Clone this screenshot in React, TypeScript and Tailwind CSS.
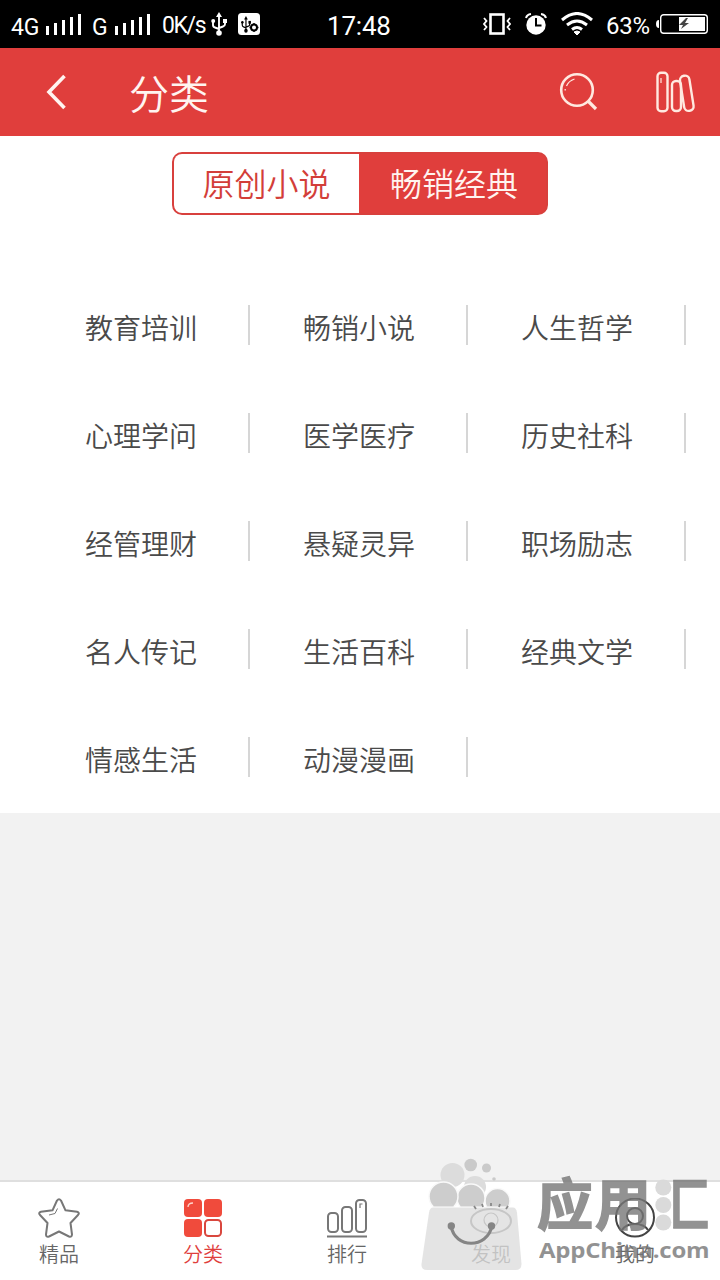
import React from 'react';

const categories = [
  '教育培训', '畅销小说', '人生哲学',
  '心理学问', '医学医疗', '历史社科',
  '经管理财', '悬疑灵异', '职场励志',
  '名人传记', '生活百科', '经典文学',
  '情感生活', '动漫漫画',
];

const Signal = () => (
  <svg width="36" height="24" viewBox="0 0 36 24" fill="#fff" className="shrink-0">
    <rect x="0" y="14" width="3" height="9" />
    <rect x="8" y="11" width="3" height="12" />
    <rect x="16" y="8" width="3" height="15" />
    <rect x="24" y="5" width="3" height="18" />
    <rect x="32" y="2" width="3" height="21" />
  </svg>
);

const UsbShape = () => (
  <>
    <path d="M8 4v17M2 9v4q0 2 2 2.500L8 17M14 9v3q0 2-2 2.500L8 16" fill="none" stroke="currentColor" strokeWidth="1.900" />
    <path d="M8 0l3 5H5z" fill="currentColor" />
    <circle cx="8" cy="21" r="2.800" fill="currentColor" />
    <circle cx="2.200" cy="9" r="2" fill="currentColor" />
    <rect x="12" y="7" width="4" height="4" fill="currentColor" />
  </>
);

const StatusBar = () => (
  <div className="flex h-12 items-center bg-black font-[Roboto,sans-serif] leading-none whitespace-nowrap text-white">
    <span className="ml-[11px] w-[35px] shrink-0 pt-[7px] text-[23px] tracking-[-0.3px]">4G</span>
    <Signal />
    <span className="ml-[10px] w-[23px] shrink-0 pt-[7px] text-[23px]">G</span>
    <Signal />
    <span className="ml-[11px] w-[49px] shrink-0 pt-[3px] text-[23px] tracking-[-1.4px]">0K/s</span>
    <svg width="16" height="24" viewBox="0 0 16 24" className="shrink-0">
      <UsbShape />
    </svg>
    <svg width="22" height="22" viewBox="0 0 22 22" className="ml-[11px] shrink-0">
      <rect width="22" height="22" rx="3.500" fill="#fff" />
      <g transform="translate(3 3) scale(.62 .7)" className="text-black">
        <UsbShape />
      </g>
      <circle cx="16" cy="14.500" r="3" fill="none" stroke="#000" strokeWidth="2" />
      <path d="M16 10v2M16 17v2M11.500 14.500h2M18.500 14.500h2" stroke="#000" strokeWidth="1.400" />
    </svg>
    <span className="ml-[67px] w-[156px] shrink-0 pt-[3px] text-[26px] tracking-[-0.2px]">17:48</span>
    <svg width="28" height="24" viewBox="0 0 28 24" fill="none" stroke="#fff" className="shrink-0">
      <rect x="7.500" y="2.500" width="13" height="19" strokeWidth="2.600" />
      <path d="M1 6l2.500 3L1 12l2.500 3L1 18M27 6l-2.500 3 2.500 3-2.500 3 2.500 3" strokeWidth="1.800" />
    </svg>
    <svg width="22" height="24" viewBox="0 0 22 24" className="ml-[14px] shrink-0">
      <circle cx="11" cy="13" r="9.700" fill="#fff" />
      <path d="M1 6q1-3.500 5-4M21 6q-1-3.500-5-4" stroke="#fff" strokeWidth="2" fill="none" />
      <path d="M11 6v7.500h5.500" stroke="#000" strokeWidth="2" fill="none" />
    </svg>
    <svg width="32" height="24" viewBox="0 0 32 24" fill="none" stroke="#fff" strokeWidth="3" className="ml-[14px] shrink-0">
      <path d="M1 8Q16-5 31 8M6 13q10-8 20 0M11 17.500q5-4 10 0" />
      <path d="M13 20q3-2 6 0l-3 3z" fill="#fff" strokeWidth="1" />
    </svg>
    <span className="ml-[13px] w-[50px] shrink-0 pt-[4px] text-2xl tracking-[-0.3px]">63%</span>
    <svg width="52" height="20" viewBox="0 0 52 20" className="shrink-0">
      <path d="M3 6v8Q0 14 0 10t3-4" fill="#fff" />
      <rect x="4.700" y=".7" width="46.600" height="18.600" rx="3" fill="none" stroke="#fff" strokeWidth="1.400" />
      <rect x="23" y="3" width="26" height="14" fill="#fff" />
      <path d="M30 4l-7 7h4l-2 4 8-6h-4l3-5z" fill="#444" />
    </svg>
  </div>
);

const Header = () => (
  <header className="flex h-[88px] items-center bg-[#e03e3c] text-white">
    <svg width="20" height="36" viewBox="0 0 20 36" fill="none" stroke="#fff4f0" strokeWidth="3.600" className="ml-[46px]">
      <path d="M18.500 2L3 18l15.500 16" />
    </svg>
    <h1 className="ml-[63px] text-[40px] leading-none font-[350] text-[#fff4f0]">分类</h1>
    <svg width="40" height="40" viewBox="0 0 40 40" fill="none" stroke="#ffe9e0" className="ml-auto">
      <circle cx="18" cy="18" r="15.800" strokeWidth="2.600" />
      <path d="M29 29l8 8" strokeWidth="3.200" />
      <path d="M7.500 14q2-5 8-7" strokeWidth="1.300" />
      <path d="M6.200 17v1.500" strokeWidth="1.300" />
    </svg>
    <svg width="40" height="42" viewBox="0 0 40 42" fill="none" stroke="#ffe9e0" strokeWidth="2.400" className="mr-6 ml-[57px]">
      <rect x="1.500" y="1.700" width="10" height="38.500" rx="3.500" />
      <rect x="16" y="10" width="9" height="30" rx="4" />
      <rect x="26" y="4.500" width="9.500" height="35.500" rx="4.500" transform="rotate(-9 31 22)" />
      <path d="M5 7v5" strokeWidth="1.200" />
    </svg>
  </header>
);

const Segmented = () => (
  <div className="mx-auto flex h-[63px] w-[376px] rounded-[10px] border-2 border-[#d8403d] bg-[#e03e3c] text-[32px] leading-none font-[350]">
    <button className="w-[185px] rounded-l-lg bg-white pb-[3px] text-[#d33e39]">原创小说</button>
    <button className="flex-1 pb-[3px] pl-[3px] text-[#fff4f0]">畅销经典</button>
  </div>
);

const StarIcon = () => (
  <svg width="42" height="40" viewBox="0 0 42 40" fill="none" stroke="#777" strokeWidth="2" strokeLinejoin="round">
    <path d="M19 2.500q2-2.500 4 0l4.500 9.800 11.500 1.400q3 .8 1 3.300l-7.500 8 1.500 11.500q-.2 3-3 2L21 33.500 11 38.500q-3 1-3-2L9.500 25 2 17q-2-2.500 1-3.300l11.500-1.400z" />
    <path d="M11 17l6-1.500 2.500-5" strokeWidth="1" />
  </svg>
);

const GridIcon = () => (
  <svg width="38" height="40" viewBox="0 0 38 40">
    <g fill="#f04b3c">
      <rect x="0" y="1" width="18" height="18" rx="4" />
      <rect x="20" y="1" width="18" height="18" rx="4" />
      <rect x="0" y="21" width="18" height="18" rx="4" />
    </g>
    <rect x="21" y="22" width="16" height="16" rx="3.500" fill="#fff" stroke="#d9473e" strokeWidth="2" />
    <path d="M4 9q0-4 5-4" fill="none" stroke="#ffd5cc" strokeWidth="1.300" />
  </svg>
);

const RankIcon = () => (
  <svg width="40" height="40" viewBox="0 0 40 40" fill="none" stroke="#777" strokeWidth="2">
    <rect x="1" y="15" width="10" height="19" rx="3.500" />
    <rect x="15" y="9" width="10" height="25" rx="3.500" />
    <rect x="29" y="2" width="10" height="32" rx="3.500" />
    <path d="M0 38.500h40" />
    <path d="M33 10V6h2.500" strokeWidth="1.200" />
  </svg>
);

const EyeIcon = () => (
  <svg width="42" height="40" viewBox="0 0 42 40" fill="none" stroke="#777" strokeWidth="2">
    <ellipse cx="21" cy="23" rx="20" ry="12" />
    <circle cx="21" cy="22" r="7" strokeWidth="1.200" />
  </svg>
);

const UserIcon = () => (
  <svg width="40" height="40" viewBox="0 0 40 40" fill="none" stroke="#444" strokeWidth="2">
    <circle cx="20" cy="19.500" r="19" />
    <circle cx="20" cy="18" r="8" />
    <path d="M7 32q4-6 13-6t13 6" />
  </svg>
);

const tabs = [
  { label: '精品', icon: <StarIcon /> },
  { label: '分类', icon: <GridIcon />, active: true },
  { label: '排行', icon: <RankIcon /> },
  { label: '发现', icon: <EyeIcon /> },
  { label: '我的', icon: <UserIcon /> },
];

const BottomNav = () => (
  <nav className="flex h-[100px] gap-[104px] border-t-2 border-[#dfdfdf] bg-white pt-4 pl-[39px]">
    {tabs.map((tab) => (
      <div
        key={tab.label}
        className={`flex w-10 shrink-0 flex-col items-center text-xl leading-none font-[350] whitespace-nowrap ${
          tab.active ? 'text-[#e03e3c]' : 'text-[#666]'
        }`}
      >
        {tab.icon}
        <span className="mt-[6px]">{tab.label}</span>
      </div>
    ))}
  </nav>
);

const Watermark = () => (
  <div className="pointer-events-none absolute right-0 bottom-0 h-[124px] w-[300px]">
    <svg width="300" height="124" viewBox="0 0 300 124" className="absolute inset-0">
      <clipPath id="bag-top">
        <rect width="100" height="50.500" />
      </clipPath>
      <g fill="#dcdcdc">
        <circle cx="32.500" cy="19" r="12" />
        <circle cx="55" cy="31" r="11" />
      </g>
      <g fill="#cacaca">
        <circle cx="50.700" cy="9" r="6.300" />
        <circle cx="66.500" cy="12" r="4.500" />
        <circle cx="74" cy="23" r="1.800" />
      </g>
      <g fill="#cdcdcd" stroke="#f9f9f9" strokeWidth="1.500" clipPath="url(#bag-top)">
        <circle cx="77.500" cy="45" r="12.500" />
        <circle cx="51" cy="42" r="14" />
        <circle cx="23.500" cy="40.500" r="14.500" />
      </g>
      <path d="M13 51.500h80q3 0 4 5l4.500 51.500q0 6-6 6H7q-6 0-5.500-6L9 56.500q1-5 4-5z" fill="#dcdcdc" fillOpacity=".78" />
      {/* lashes of the eye icon show through the bag */}
      <path d="M54 50l2 3M62 48l1 3M71 47v3M80 48l-1 3M88 50l-2 3" fill="none" stroke="#888" strokeWidth="1.800" />
      <path d="M31 70c4 23 36 23 41 0" fill="none" stroke="#858585" strokeWidth="3.200" />
      <circle cx="31.300" cy="70" r="3.700" fill="#858585" />
      <circle cx="71.500" cy="70" r="3.700" fill="#858585" />
      <g fill="#dadada">
        <circle cx="243.300" cy="31.500" r="8" />
        <circle cx="243.300" cy="49" r="8" />
        <circle cx="243.300" cy="66.500" r="8" />
      </g>
    </svg>
    <div className="absolute top-[17px] left-[117px] flex text-[56px] leading-none font-bold whitespace-nowrap text-[#777] opacity-80 [-webkit-text-stroke:1.5px_#777] [stroke-linejoin:round]">
      <span className="w-[58px]">应</span>
      <span className="w-[58px]">用</span>
      <span className="[clip-path:inset(0_-4px_0_36%)]">汇</span>
    </div>
    <div className="absolute top-[82px] left-[119px] origin-left scale-x-[1.09] font-['Open_Sans',sans-serif] text-[22px] leading-none font-bold tracking-[-0.2px] whitespace-nowrap text-[#777] opacity-80">
      AppChina.com
    </div>
  </div>
);

export default function App() {
  return (
    <div className="relative flex h-[1280px] w-[720px] flex-col overflow-hidden bg-[#f2f2f2] font-['Noto_Sans_CJK_SC',sans-serif]">
      <StatusBar />
      <Header />
      <main className="h-[677px] bg-white pt-4">
        <Segmented />
        <div className="mt-[56px] grid grid-cols-[repeat(3,218px)] pl-8">
          {categories.map((name) => (
            <div key={name} className="flex h-[108px] items-center">
              <span className="flex-1 pt-[3px] text-center text-[28px] leading-none font-[350] text-[#4a4a4a]">{name}</span>
              <span className="-ml-0.5 h-10 w-0.5 bg-[#d6d6d6]" />
            </div>
          ))}
        </div>
      </main>
      <div className="flex-1" />
      <BottomNav />
      <Watermark />
    </div>
  );
}
